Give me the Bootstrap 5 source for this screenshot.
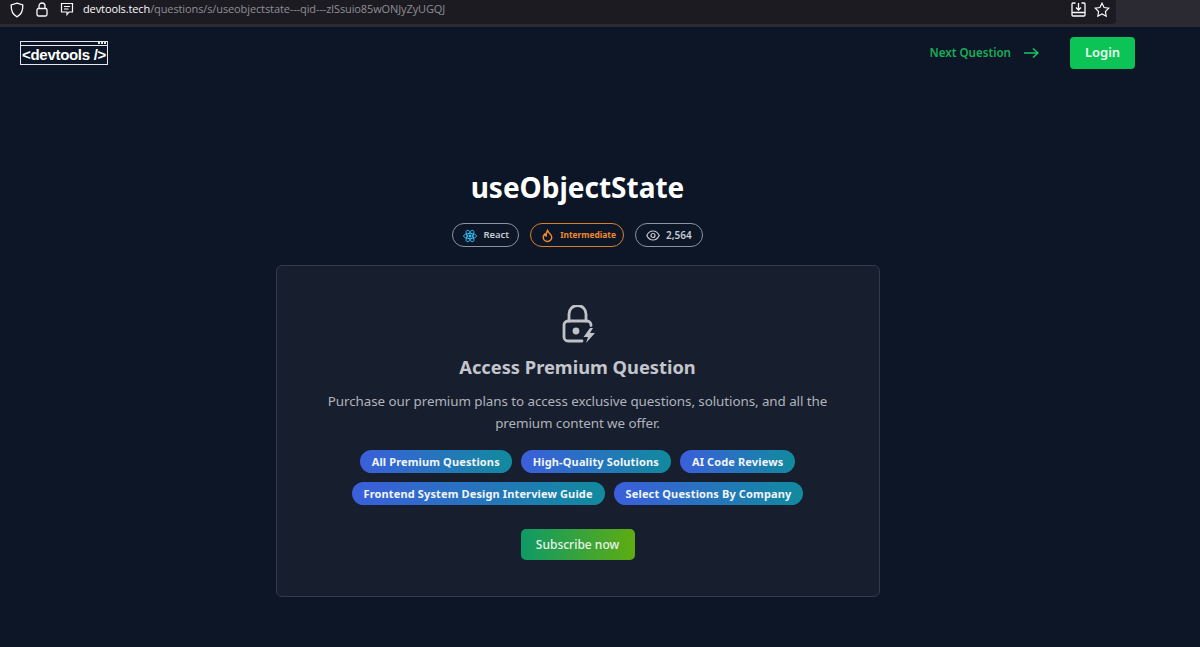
<!DOCTYPE html>
<html>
  <head>
    <title>useObjectState - devtools</title>
    <link href="https://cdn.jsdelivr.net/npm/bootstrap@5.3.0/dist/css/bootstrap.min.css" rel="stylesheet">
    <style>
      html, body { height: 100%; }
      body { background: #0c1626; font-family: "Noto Sans", sans-serif; overflow: hidden; }
      .browser-bar { height: 27px; background: #2b2a33; }
      .url-box { width: 1116px; height: 24px; background: #1c1b22; border-bottom-right-radius: 4px; padding: 0 6px 5px 10px; gap: 12px; }
      .url-text { font-family: "Open Sans", sans-serif; font-size: 11px; letter-spacing: -0.11px; color: #8f8e94; margin-left: -3px; white-space: nowrap; }
      .url-text b { font-weight: 400; color: #fbfbfe; }
      .star-icon { margin-left: -4px; }
      .page-wrap { width: 1155px; }
      .top-row { padding: 10px 20px 0 20px; height: 42px; }
      .logo-box { width: 88px; height: 24px; border: 1px solid #e5e7eb; margin-top: 4px; }
      .logo-strip { height: 4px; border-bottom: 1px solid #e5e7eb; gap: 1px; padding-right: 1px; }
      .logo-dot { width: 2px; height: 2px; border: 1px solid #e5e7eb; }
      .logo-text { font-family: "Liberation Sans", sans-serif; font-weight: 700; font-size: 15px; line-height: 17px; color: #fff; letter-spacing: -0.3px; text-align: center; white-space: nowrap; }
      .next-link { color: #18ad58; font-size: 11.6px; font-weight: 600; text-decoration: none; gap: 12px; margin-right: 31px; }
      .login-btn { width: 65px; height: 32px; padding: 0; background: #0cc455; border: 0; border-radius: 4px; color: #e9fbf0; font-size: 13px; font-weight: 600; }
      .q-title { color: #fff; font-size: 28px; font-weight: 700; line-height: 38px; margin: 99px 0 0; }
      .meta-row { margin-top: 17px; gap: 11px; }
      .meta-pill { height: 24px; border: 1px solid #8b93a1; border-radius: 12px; color: #c6cad1; font-size: 9.5px; font-weight: 600; padding: 1px 9px 0 10px; gap: 6px; }
      .meta-pill.level { border-color: #d8802c; color: #f08a2c; font-size: 8.4px; font-weight: 700; padding: 1px 7px 0 11px; gap: 7px; }
      .meta-pill.count { font-size: 10px; padding-right: 10px; }
      .premium-card { width: 604px; height: 332px; margin-top: 18px; background: #171e2d; border: 1px solid #333a4a; border-radius: 6px; padding-top: 39px; }
      .lock-icon { margin-left: 3px; }
      .premium-title { color: #c3c6cc; font-size: 18.3px; font-weight: 700; line-height: 26px; margin: 11px 0 0; }
      .premium-text { color: #b0b4bc; font-size: 13.4px; letter-spacing: -0.07px; line-height: 22px; width: 520px; margin: 10px 0 0; }
      .perk-rows { margin-top: 16px; gap: 9px; }
      .perk-line { gap: 9px; }
      .perk-pill { height: 23px; line-height: 23px; padding: 0 12px; border-radius: 12px; color: #f2f5fa; font-size: 11px; font-weight: 700; letter-spacing: 0.13px; background: linear-gradient(90deg, #3b5fdb, #118a9e); white-space: nowrap; }
      .subscribe-btn { width: 114px; height: 31px; padding: 0; margin-top: 24px; border: 0; border-radius: 5px; color: #e8f3ec; font-size: 12px; font-weight: 500; background: linear-gradient(90deg, #0f9a66, #5eac12); }
    </style>
  </head>
  <body>
    <!-- barra do navegador -->
    <div class="browser-bar">
      <div class="url-box d-flex align-items-center">
        <svg width="14" height="16" viewBox="0 0 14 16" fill="none" stroke="#fbfbfe" stroke-width="1.3"><path d="M7 1.2 12.8 3c.2 5-1 9.500-5.800 11.800C2.200 12.500 1 8 1.200 3z"/></svg>
        <svg width="12" height="15" viewBox="0 0 12 15" fill="none" stroke="#fbfbfe" stroke-width="1.3"><rect x="1" y="6.500" width="10" height="7.500" rx="1.500"/><path d="M3 6.500V4a3 3 0 0 1 6 0v2.500"/></svg>
        <svg width="14" height="15" viewBox="0 0 14 15" fill="none" stroke="#fbfbfe" stroke-width="1.2"><path d="M1.500 1.500h11v8.500H9l-2 2.500V10H1.500z"/><path d="M4 4.500h6M4 7h4.500"/></svg>
        <span class="url-text"><b>devtools.tech</b>/questions/s/useobjectstate---qid---zlSsuio85wONJyZyUGQJ</span>
        <svg class="ms-auto" width="15" height="15" viewBox="0 0 15 15" fill="none" stroke="#fbfbfe" stroke-width="1.3"><path d="M4.500 1H2a1 1 0 0 0-1 1v11a1 1 0 0 0 1 1h11a1 1 0 0 0 1-1V2a1 1 0 0 0-1-1h-2.500"/><path d="M1 10.500h13M7.500 1v6.500M5 5.500l2.500 2.500L10 5.500"/></svg>
        <svg class="star-icon" width="16" height="15" viewBox="0 0 16 15" fill="none" stroke="#fbfbfe" stroke-width="1.2"><path d="m8 1.200 2.100 4.300 4.700.7-3.400 3.300.8 4.700L8 12l-4.200 2.200.8-4.700L1.200 6.200l4.700-.7z"/></svg>
      </div>
    </div>

    <div class="page-wrap">
      <div class="top-row d-flex justify-content-between align-items-start">
        <div class="logo-box">
          <div class="logo-strip d-flex justify-content-end">
            <span class="logo-dot"></span><span class="logo-dot"></span><span class="logo-dot"></span>
          </div>
          <div class="logo-text">&lt;devtools /&gt;</div>
        </div>
        <div class="d-flex align-items-center">
          <a href="#" class="next-link d-flex align-items-center">
            Next Question
            <svg width="16" height="12" viewBox="0 0 16 12" fill="none" stroke="#17c964" stroke-width="1.500"><path d="M1 6h14M10 1.500 15 6l-5 4.500"/></svg>
          </a>
          <button class="btn login-btn">Login</button>
        </div>
      </div>

      <div class="d-flex flex-column align-items-center">
        <h1 class="q-title">useObjectState</h1>
        <div class="meta-row d-flex">
          <span class="meta-pill d-flex align-items-center">
            <svg width="14" height="14" viewBox="0 0 24 24" fill="none" stroke="#38bdf8" stroke-width="1.500"><circle cx="12" cy="12" r="2" fill="#38bdf8"/><ellipse cx="12" cy="12" rx="11" ry="4.500"/><ellipse cx="12" cy="12" rx="11" ry="4.500" transform="rotate(60 12 12)"/><ellipse cx="12" cy="12" rx="11" ry="4.500" transform="rotate(120 12 12)"/></svg>
            React
          </span>
          <span class="meta-pill level d-flex align-items-center">
            <svg width="11" height="14" viewBox="0 0 13 15" fill="none" stroke="#f08a2c" stroke-width="1.700"><path d="M6.500 1c.5 2.500 5 4 5 8a5 5 0 0 1-10 0c0-1.500.7-2.800 1.700-3.700.2 1.200.8 1.900 1.600 2.200C4.800 5.500 5.200 3 6.500 1z"/></svg>
            Intermediate
          </span>
          <span class="meta-pill count d-flex align-items-center">
            <svg width="14" height="11" viewBox="0 0 14 11" fill="none" stroke="#c6cad1" stroke-width="1.200"><path d="M.8 5.500C2.200 2.500 4.400 1 7 1s4.800 1.500 6.200 4.500C11.800 8.500 9.600 10 7 10S2.200 8.500.8 5.500z"/><circle cx="7" cy="5.500" r="2"/></svg>
            2,564
          </span>
        </div>

        <div class="premium-card d-flex flex-column align-items-center text-center">
          <svg class="lock-icon" width="34" height="38" viewBox="0 0 34 38" fill="none" stroke="#bfc2c8" stroke-width="2.800" stroke-linecap="round" stroke-linejoin="round"><path d="M7 16V9a8.500 8.500 0 0 1 17 0v7"/><path d="M29 20.500V20a4 4 0 0 0-4-4H6a4 4 0 0 0-4 4v12a4 4 0 0 0 4 4h14"/><circle cx="14" cy="26" r="2" fill="#bfc2c8"/><path d="M28 23 21.500 32h4.500l-2 6 9-10h-5l3-5z" fill="#bfc2c8" stroke="none"/></svg>
          <h2 class="premium-title">Access Premium Question</h2>
          <p class="premium-text">Purchase our premium plans to access exclusive questions, solutions, and all the premium content we offer.</p>
          <div class="perk-rows d-flex flex-column align-items-center">
            <div class="perk-line d-flex">
              <span class="perk-pill">All Premium Questions</span>
              <span class="perk-pill">High-Quality Solutions</span>
              <span class="perk-pill">AI Code Reviews</span>
            </div>
            <div class="perk-line d-flex">
              <span class="perk-pill">Frontend System Design Interview Guide</span>
              <span class="perk-pill">Select Questions By Company</span>
            </div>
          </div>
          <button class="btn subscribe-btn">Subscribe now</button>
        </div>
      </div>
    </div>
    <script src="https://cdn.jsdelivr.net/npm/bootstrap@5.3.0/dist/js/bootstrap.bundle.min.js"></script>
  </body>
</html>
